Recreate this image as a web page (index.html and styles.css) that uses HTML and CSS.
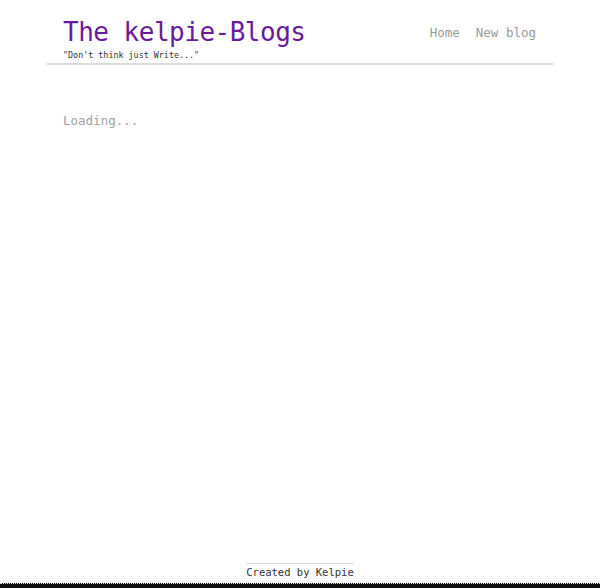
FILE: index.html
```html
<!DOCTYPE html>
<html>
<head>
<meta charset="utf-8">
<link rel="stylesheet" href="styles.css">
</head>
<body>
<div class="page">
  <div class="container">
    <header class="header">
      <div class="brand">
        <h1 class="title">The kelpie-Blogs</h1>
        <p class="tagline">"Don't think just Write..."</p>
      </div>
      <nav class="nav">
        <a class="nav-link">Home</a>
        <a class="nav-link">New blog</a>
      </nav>
    </header>
    <main class="content">
      <p class="loading">Loading...</p>
    </main>
  </div>
  <footer class="footer">
    <span class="credit">Created by Kelpie</span>
  </footer>
  <div class="bottom-bar"></div>
</div>
</body>
</html>
```

FILE: styles.css
```css
html, body {
  margin: 0;
  padding: 0;
  background: #ffffff;
}
body {
  font-family: "DejaVu Sans Mono", "Liberation Mono", monospace;
}
.page {
  height: 588px;
  display: flex;
  flex-direction: column;
}
.container {
  width: 506px;
  margin: 0 auto;
  flex: 1;
}
.header {
  display: flex;
  justify-content: space-between;
  align-items: flex-start;
  padding: 0 17px 0 16px;
  border-bottom: 2px solid #dcdcdc;
  height: 65px;
  box-sizing: border-box;
}
.title {
  margin: 16px 0 0;
  font-size: 26px;
  font-weight: normal;
  color: #6a1b9a;
  line-height: 32px;
  letter-spacing: -0.5px;
}
.tagline {
  margin: 2px 0 0;
  font-size: 8.4px;
  line-height: 11px;
  color: #333;
}
.nav {
  display: flex;
  gap: 16px;
  margin-top: 25px;
}
.nav-link {
  font-size: 12.5px;
  color: #999;
  line-height: 16px;
}
.content {
  padding: 48px 16px 0;
}
.loading {
  margin: 0;
  font-size: 12.5px;
  color: #a0a0a0;
  line-height: 16px;
}
.footer {
  display: flex;
  justify-content: center;
  padding-bottom: 4px;
}
.credit {
  font-size: 10.5px;
  color: #333;
  border-top: 1px solid #d5dde6;
  padding-top: 2px;
  line-height: 13px;
}
.bottom-bar {
  height: 4px;
  background: #111;
  border-top: 1px dotted #ddd;
}
```
